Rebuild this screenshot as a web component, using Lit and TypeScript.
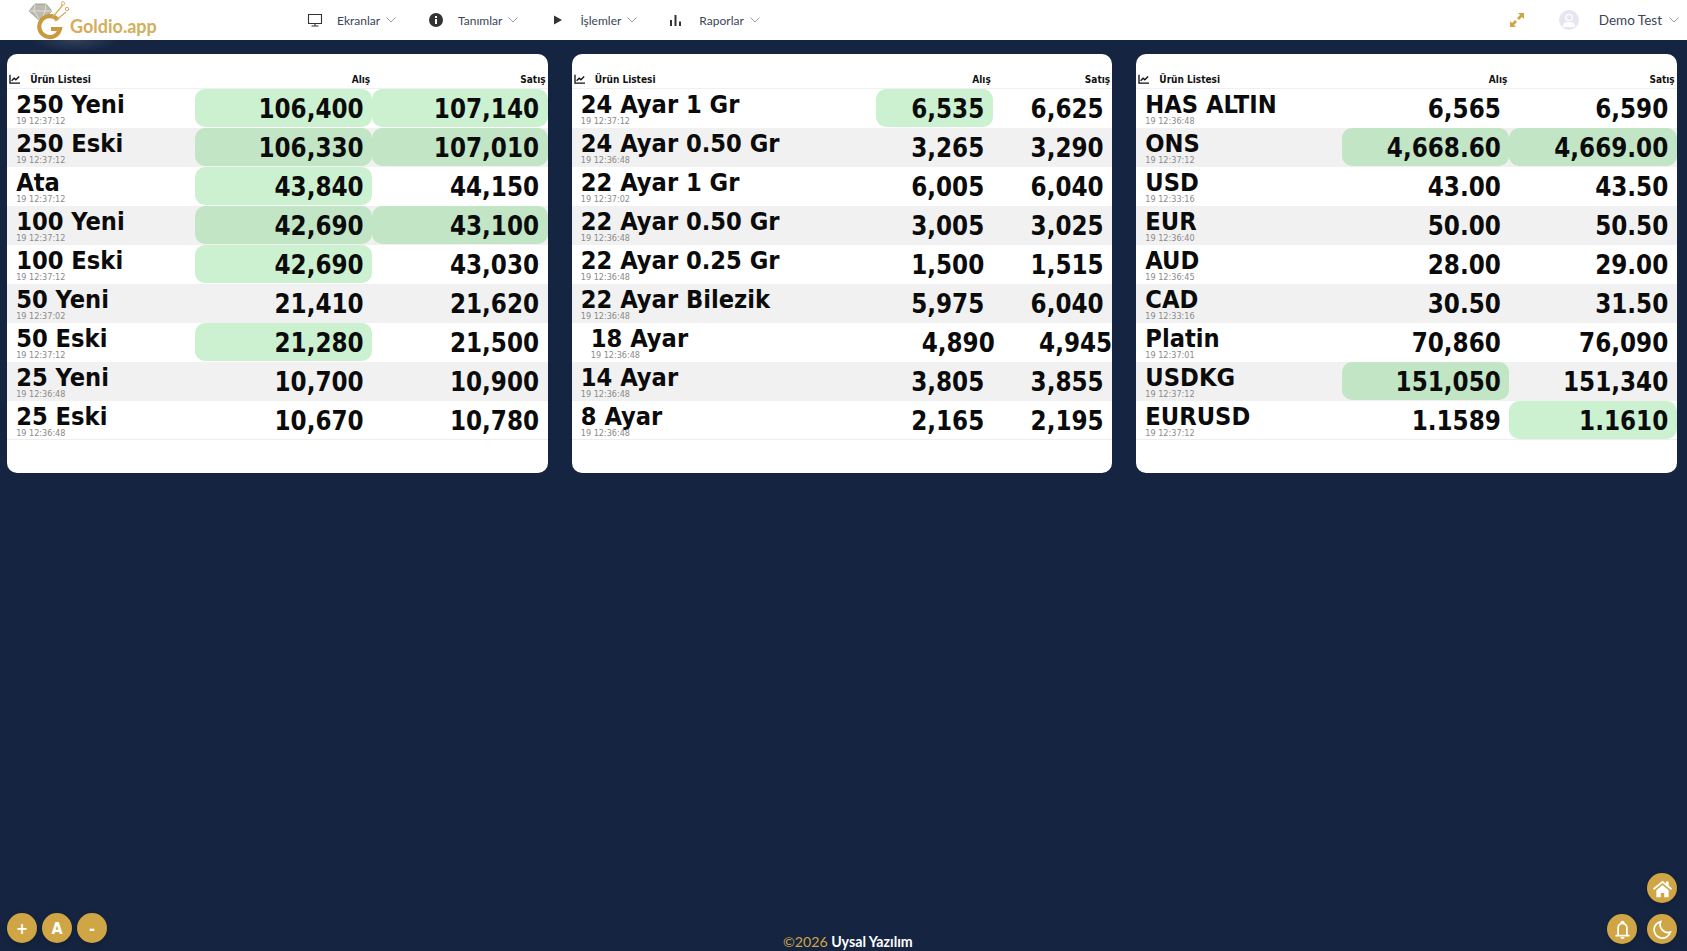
import { LitElement, html, css } from 'lit';
import { customElement } from 'lit/decorators.js';

type Row = { name: string; time: string; buy: string; sell: string; bf?: number; sf?: number; shifted?: boolean };

const cardOne: Row[] = [
  { name: '250 Yeni', time: '19 12:37:12', buy: '106,400', sell: '107,140', bf: 1, sf: 1 },
  { name: '250 Eski', time: '19 12:37:12', buy: '106,330', sell: '107,010', bf: 1, sf: 1 },
  { name: 'Ata', time: '19 12:37:12', buy: '43,840', sell: '44,150', bf: 1 },
  { name: '100 Yeni', time: '19 12:37:12', buy: '42,690', sell: '43,100', bf: 1, sf: 1 },
  { name: '100 Eski', time: '19 12:37:12', buy: '42,690', sell: '43,030', bf: 1 },
  { name: '50 Yeni', time: '19 12:37:02', buy: '21,410', sell: '21,620' },
  { name: '50 Eski', time: '19 12:37:12', buy: '21,280', sell: '21,500', bf: 1 },
  { name: '25 Yeni', time: '19 12:36:48', buy: '10,700', sell: '10,900' },
  { name: '25 Eski', time: '19 12:36:48', buy: '10,670', sell: '10,780' },
];

const cardTwo: Row[] = [
  { name: '24 Ayar 1 Gr', time: '19 12:37:12', buy: '6,535', sell: '6,625', bf: 1 },
  { name: '24 Ayar 0.50 Gr', time: '19 12:36:48', buy: '3,265', sell: '3,290' },
  { name: '22 Ayar 1 Gr', time: '19 12:37:02', buy: '6,005', sell: '6,040' },
  { name: '22 Ayar 0.50 Gr', time: '19 12:36:48', buy: '3,005', sell: '3,025' },
  { name: '22 Ayar 0.25 Gr', time: '19 12:36:48', buy: '1,500', sell: '1,515' },
  { name: '22 Ayar Bilezik', time: '19 12:36:48', buy: '5,975', sell: '6,040' },
  { name: '18 Ayar', time: '19 12:36:48', buy: '4,890', sell: '4,945', shifted: true },
  { name: '14 Ayar', time: '19 12:36:48', buy: '3,805', sell: '3,855' },
  { name: '8 Ayar', time: '19 12:36:48', buy: '2,165', sell: '2,195' },
];

const cardThree: Row[] = [
  { name: 'HAS ALTIN', time: '19 12:36:48', buy: '6,565', sell: '6,590' },
  { name: 'ONS', time: '19 12:37:12', buy: '4,668.60', sell: '4,669.00', bf: 1, sf: 1 },
  { name: 'USD', time: '19 12:33:16', buy: '43.00', sell: '43.50' },
  { name: 'EUR', time: '19 12:36:40', buy: '50.00', sell: '50.50' },
  { name: 'AUD', time: '19 12:36:45', buy: '28.00', sell: '29.00' },
  { name: 'CAD', time: '19 12:33:16', buy: '30.50', sell: '31.50' },
  { name: 'Platin', time: '19 12:37:01', buy: '70,860', sell: '76,090' },
  { name: 'USDKG', time: '19 12:37:12', buy: '151,050', sell: '151,340', bf: 1 },
  { name: 'EURUSD', time: '19 12:37:12', buy: '1.1589', sell: '1.1610', sf: 1 },
];

const chevron = html`<svg class="chev" viewBox="0 0 10 6"><path d="M.5.5L5 5 9.5.5" fill="none" stroke="#8a93a6" stroke-width="0.9"/></svg>`;

@customElement('app-root')
export class AppRoot extends LitElement {
  static styles = css`
    :host {
      display: flex;
      flex-direction: column;
      height: 951px;
      width: 1687px;
      overflow: hidden;
      position: relative;
      background: #152541;
      font-family: 'DejaVu Sans Condensed', 'DejaVu Sans', sans-serif;
    }
    .nav {
      height: 40px;
      flex: none;
      background: #fff;
      display: flex;
      align-items: center;
      font-family: 'Lato', 'Noto Sans', sans-serif;
      font-size: 12px;
      color: #3a4558;
      position: relative;
    }
    .nav::after {
      content: '';
      position: absolute;
      left: 30px;
      top: 40px;
      width: 90px;
      height: 12px;
      background: radial-gradient(ellipse at 50% 0, rgba(255, 255, 255, 0.12), transparent 70%);
    }
    .logo { margin-left: 26px; width: 281px; height: 40px; display: flex; flex: none; }
    .logo svg { width: 44px; height: 40px; flex: none; }
    .logo span {
      font-family: 'Lato', sans-serif;
      font-weight: 700;
      font-size: 18px;
      line-height: 20px;
      color: #d3ae5c;
      margin-top: 16px;
    }
    .menu { display: flex; gap: 32px; align-items: center; flex: none; }
    .menu-item { display: flex; align-items: center; }
    .menu-item svg.ico { width: 16px; height: 16px; margin-right: 14px; flex: none; }
    .chev { width: 10px; height: 6px; margin-left: 6px; flex: none; }
    .nav-right { margin-left: auto; display: flex; align-items: center; }
    .expand { width: 16px; height: 16px; margin-right: 34px; }
    .avatar { width: 20px; height: 20px; margin-right: 20px; }
    .user { font-size: 13.5px; }
    .user-chev { margin: 0 8px 0 7px; }

    .cards {
      display: grid;
      grid-template-columns: repeat(3, 540.4px);
      column-gap: 24.2px;
      padding: 14px 0 0 7.2px;
    }
    .card {
      height: 419px;
      background: #fff;
      border-radius: 10px;
      padding-top: 17px;
      box-sizing: border-box;
      overflow: hidden;
    }
    .row, .head { display: grid; }
    .one .row, .one .head { grid-template-columns: 188px 177px 175.4px; }
    .two .row, .two .head { grid-template-columns: 304px 117px 119.4px; }
    .three .row, .three .head { grid-template-columns: 206px 167px 167.4px; }
    .head {
      height: 17px;
      align-items: center;
      font-size: 10px;
      font-weight: 700;
      color: #111;
      border-bottom: 1px solid #eef0f4;
    }
    .head > div:first-child { display: flex; align-items: center; padding-left: 2px; }
    .head svg { width: 12px; height: 10px; margin: 0 9px 2px 0; }
    .head .num { text-align: right; padding-right: 2px; }
    .row { height: 39px; border-bottom: 1px solid transparent; box-sizing: border-box; }
    .row:nth-child(even) { background: #f1f1f1; }
    .row:last-child { border-bottom-color: #eceef2; }
    .name-cell { padding: 1px 0 0 9px; min-width: 0; white-space: nowrap; }
    .name {
      font-size: 25.2px;
      font-weight: 700;
      line-height: 30px;
      color: #0b0b0b;
    }
    .time {
      font-size: 9px;
      line-height: 9px;
      color: #8a8a8a;
      margin-top: -3px;
    }
    .val {
      font-size: 25.7px;
      font-weight: 700;
      text-align: right;
      padding: 3px 8.5px 0 0;
      color: #0b0b0b;
      line-height: 34px;
      border-radius: 10px;
      white-space: nowrap;
    }
    .val.flash { background: #ccf1d0; }
    .row:nth-child(even) .val.flash { background: #c1e5c5; }
    .shifted .name-cell { padding-left: 19px; }
    .shifted .val { padding-right: 0; margin-right: -2px; }
    .shifted .val:last-child { margin-right: 0; }

    .round {
      width: 30px;
      height: 30px;
      border-radius: 50%;
      background: #d0a545;
      color: #fff;
      display: flex;
      align-items: center;
      justify-content: center;
      font-weight: 700;
      font-size: 16px;
      position: absolute;
      box-shadow: 0 3px 6px rgba(0, 0, 0, 0.2);
    }
    .round svg { width: 21px; height: 21px; }
    .plus { left: 7px; bottom: 8px; }
    .auto { left: 42px; bottom: 8px; }
    .minus { left: 77px; bottom: 8px; }
    .home { right: 10px; bottom: 48px; }
    .bell { right: 50px; bottom: 7px; }
    .moon { right: 10px; bottom: 7px; }
    .footer {
      position: absolute;
      left: 783px;
      bottom: 0;
      font-family: 'Lato', sans-serif;
      font-size: 14.2px;
      line-height: 18px;
      font-weight: 700;
      color: #fff;
    }
    .footer b { color: #d0a545; font-weight: 400; }
  `;

  private card(cls: string, rows: Row[]) {
    return html`
      <section class="card ${cls}">
        <div class="head">
          <div>
            <svg viewBox="0 0 14 12"><path d="M1 1v10h12" fill="none" stroke="#111" stroke-width="1.6"/><path d="M3 8l3-3 2 2 4-4" fill="none" stroke="#111" stroke-width="1.6"/></svg>
            Ürün Listesi
          </div>
          <div class="num">Alış</div>
          <div class="num">Satış</div>
        </div>
        <div class="body">
          ${rows.map(
            (r) => html`
              <div class="row ${r.shifted ? 'shifted' : ''}">
                <div class="name-cell">
                  <div class="name">${r.name}</div>
                  <div class="time">${r.time}</div>
                </div>
                <div class="val ${r.bf ? 'flash' : ''}">${r.buy}</div>
                <div class="val ${r.sf ? 'flash' : ''}">${r.sell}</div>
              </div>
            `,
          )}
        </div>
      </section>
    `;
  }

  render() {
    return html`
      <header class="nav">
        <div class="logo">
          <svg viewBox="0 0 44 40">
            <path d="M3 11l6-7h11l6 7-11 11z" fill="#bdbab0" stroke="#8e8c84" stroke-width="0.7"/>
            <path d="M9 4l-1 7 7 11 4-11 1-7M3 11h23" fill="none" stroke="#e8e6de" stroke-width="0.8"/>
            <path d="M32 20a10.5 10.5 0 1 0 2 9h-9" fill="none" stroke="#c8993f" stroke-width="4.2"/>
            <path d="M26 18l10-12v-1M29 21l11-9" fill="none" stroke="#d3ae5c" stroke-width="1.3"/>
            <circle cx="37" cy="3.5" r="1.7" fill="none" stroke="#d3ae5c"/><circle cx="41" cy="9" r="1.7" fill="none" stroke="#d3ae5c"/>
          </svg>
          <span>Goldio.app</span>
        </div>
        <nav class="menu">
          <div class="menu-item">
            <svg class="ico" viewBox="0 0 16 16"><path d="M1.5 2.5h13v9h-13zM8 11.5v2.5M4.5 14h7" fill="none" stroke="#333" stroke-width="1.1"/></svg>
            Ekranlar ${chevron}
          </div>
          <div class="menu-item">
            <svg class="ico" viewBox="0 0 16 16"><circle cx="8" cy="8" r="7" fill="#333"/><path d="M7 7h2v5H7zM7 4h2v2H7z" fill="#fff"/></svg>
            Tanımlar ${chevron}
          </div>
          <div class="menu-item">
            <svg class="ico" viewBox="0 0 16 16"><path d="M4 3.5l8 4.5-8 4.5z" fill="#333"/></svg>
            İşlemler ${chevron}
          </div>
          <div class="menu-item">
            <svg class="ico" viewBox="0 0 16 16"><path d="M1 8h2v6H1zM5.500 3h2v11h-2zM10 9.500h2V14h-2z" fill="#333"/></svg>
            Raporlar ${chevron}
          </div>
        </nav>
        <div class="nav-right">
          <svg class="expand" viewBox="0 0 16 16"><path d="M9 1h6v6l-2-2-3 3-2-2 3-3zM7 15H1V9l2 2 3-3 2 2-3 3z" fill="#d0a545"/></svg>
          <svg class="avatar" viewBox="0 0 20 20"><circle cx="10" cy="10" r="10" fill="#e5e6f0"/><circle cx="10" cy="7.500" r="3.200" fill="none" stroke="#fff" stroke-width="1.300"/><path d="M4 17c0-4 2-5 6-5s6 1 6 5" fill="#fff"/></svg>
          <span class="user">Demo Test</span>
          <svg class="chev user-chev" viewBox="0 0 10 6"><path d="M.5.5L5 5 9.500.5" fill="none" stroke="#8a93a6" stroke-width="0.900"/></svg>
        </div>
      </header>
      <main class="cards">
        ${this.card('one', cardOne)} ${this.card('two', cardTwo)} ${this.card('three', cardThree)}
      </main>
      <div class="round plus">+</div>
      <div class="round auto">A</div>
      <div class="round minus">-</div>
      <div class="round home">
        <svg viewBox="0 0 24 24"><path d="M1 12L12 3l4 3.200V4h3v4.600l4 3.400-1.400 1.600L12 5.600 2.400 13.600z" fill="#fff"/><path d="M5 14l7-6 7 6v8h-5v-5h-4v5H5z" fill="#fff"/></svg>
      </div>
      <div class="round bell">
        <svg viewBox="0 0 24 24"><path d="M7 18V10a5 5 0 0 1 10 0v8M4 19h16M10.500 4.500a1.500 1.500 0 0 1 3 0M10 21.500h4" fill="none" stroke="#fff" stroke-width="2"/></svg>
      </div>
      <div class="round moon">
        <svg viewBox="0 0 24 24"><path d="M10 3a9.500 9.500 0 1 0 11 12A9 9 0 0 1 10 3z" fill="none" stroke="#fff" stroke-width="2"/></svg>
      </div>
      <div class="footer"><b>©2026</b> Uysal Yazılım</div>
    `;
  }
}
